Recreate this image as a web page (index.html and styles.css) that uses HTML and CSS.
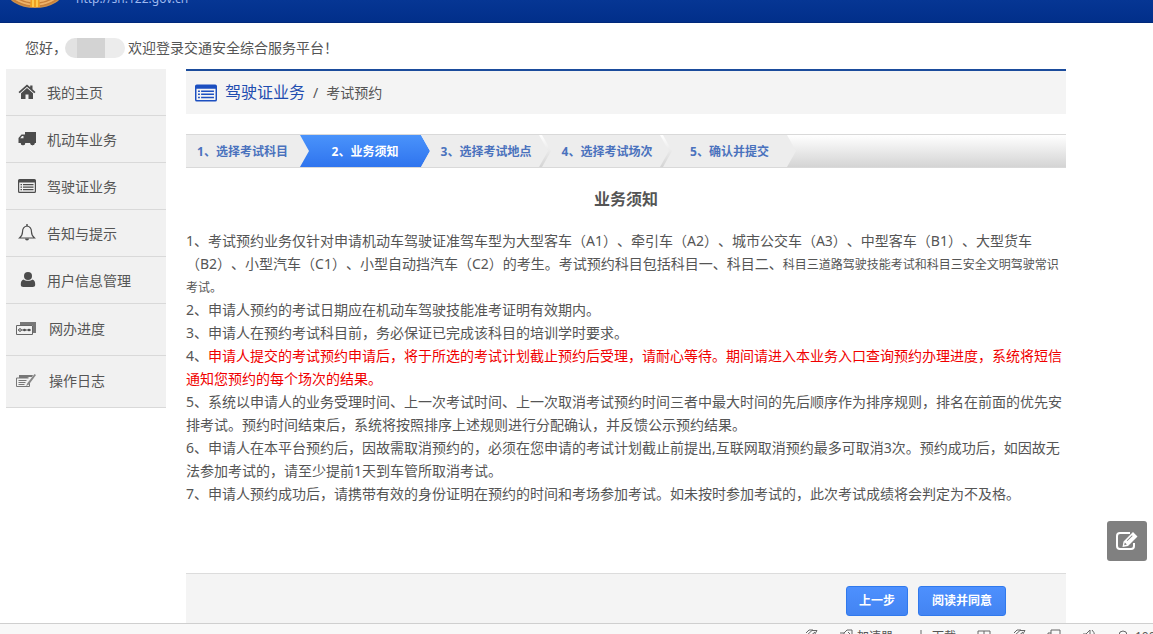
FILE: index.html
```html
<!DOCTYPE html>
<html lang="zh-CN">
<head>
<meta charset="utf-8">
<title>考试预约 - 交通安全综合服务平台</title>
<link rel="stylesheet" href="styles.css">
</head>
<body>
<header class="banner">
  <svg class="emblem" viewBox="0 0 60 30" aria-hidden="true">
    <ellipse cx="30" cy="12" rx="29" ry="18" fill="#c9904e"/>
    <ellipse cx="30" cy="11" rx="26" ry="17" fill="#eeb36a"/>
    <path d="M6 20q9 7 20 8M54 20q-9 7-20 8M12 20q6 4 14 5M48 20q-6 4-14 5" fill="none" stroke="#c9803a" stroke-width="1.500"/>
    <path d="M26 16h8l1 13H25z" fill="#f0a020"/>
    <path d="M28 16v13M32 16v13" stroke="#ffd75a" stroke-width="1.500"/>
  </svg>
  <a class="site" href="#">http://sh.122.gov.cn</a>
</header>

<div class="page">
  <p class="greeting">您好，<span class="redacted"></span>欢迎登录交通安全综合服务平台！</p>
  <div class="columns">
    <nav class="menu">
      <a href="#"><svg viewBox="0 0 18 18"><path d="M9 1.500.5 9l1.200 1.200L9 3.800l7.300 6.400L17.500 9 14.500 6.300V2.500h-2.300v1.800z"/><path d="M3 10.300 9 5l6 5.300V16h-4.500v-4.500h-3V16H3z"/></svg>我的主页</a>
      <a href="#"><svg viewBox="0 0 18 18"><path fill-rule="evenodd" d="M7 2h11v11h-1.200a2.300 2.300 0 0 1-4.600 0H7.300a2.300 2.300 0 0 1-4.600 0H.5V8l3-3.500H7zM2.200 8.200H5.500V6H4z"/><circle cx="5" cy="13.500" r="1.800"/><circle cx="14.500" cy="13.500" r="1.800"/></svg>机动车业务</a>
      <a href="#"><svg viewBox="0 0 18 18"><use href="#list"/></svg>驾驶证业务</a>
      <a href="#"><svg viewBox="0 0 18 18"><path d="M9 2C5.500 2.500 4.500 5 4.500 8c0 3-1.200 4.500-3 6h15c-1.800-1.500-3-3-3-6 0-3-1-5.500-4.500-6z" fill="none" stroke="currentColor" stroke-width="1.200"/><path d="M8.300 0h1.400v2H8.300zM7 14.500h4a2 2 0 0 1-4 0z"/></svg>告知与提示</a>
      <a href="#"><svg viewBox="0 0 18 18"><circle cx="10" cy="5" r="4"/><path d="M5.500 8.500C7 10.300 13 10.300 14.500 8.500 16.500 9 17.200 11 17.200 13.500c0 1.800-1 2.500-2.500 2.500H5.300c-1.500 0-2.500-.7-2.500-2.500C2.800 11 3.500 9 5.500 8.500z"/></svg>用户信息管理</a>
      <a class="tall" href="#"><svg viewBox="0 0 20 18"><path d="M4 2h16v11h-3V5H4z" fill="#777"/><path d="M.5 5.500h16v9H.5z" fill="#f1f1f1" stroke="#666"/><path d="M2 10h13" stroke="#555" stroke-width="1"/><circle cx="4" cy="10" r="1.300" fill="#f1f1f1" stroke="#555"/><circle cx="8.500" cy="10" r="1.300"/><circle cx="13" cy="10" r="1.300"/></svg>网办进度</a>
      <a class="tall" href="#"><svg viewBox="0 0 20 18"><path d="M3 6V3h14l-1 2h-3l-2 1z" fill="#777"/><path d="M.5 6h12M.5 6v8.500h13V10" fill="none" stroke="#777"/><path d="M2.500 8.500h8M2.500 10.500h7M2.500 12.500h6" stroke="#777"/><path d="m18.500 2-7 9-1.500 3 3-1.500L20 3z" fill="#888"/></svg>操作日志</a>
    </nav>

    <main class="content">
      <h1 class="crumbs">
        <svg viewBox="0 0 18 18" aria-hidden="true"><g id="list"><path fill-rule="evenodd" d="M1.500 2h15A1.500 1.500 0 0 1 18 3.500v11a1.500 1.500 0 0 1-1.500 1.500h-15A1.500 1.500 0 0 1 0 14.500v-11A1.500 1.500 0 0 1 1.500 2zM1.200 5.500v9l.3.300h15l.3-.3v-9z"/><path d="M2.500 7H4v1.200H2.500zM5 7h10.500v1.200H5zM2.500 9.500H4v1.200H2.500zM5 9.500h10.500v1.200H5zM2.500 12H4v1.200H2.500zM5 12h10.500v1.200H5z"/></g></svg>
        <a href="#">驾驶证业务</a><span>/</span><span>考试预约</span>
      </h1>

      <ol class="steps">
        <li class="first">1、选择考试科目</li>
        <li class="current" aria-current="step">2、业务须知</li>
        <li>3、选择考试地点</li>
        <li>4、选择考试场次</li>
        <li class="last">5、确认并提交</li>
      </ol>

      <h2 class="title">业务须知</h2>
      <div class="notice">
        <p>1、考试预约业务仅针对申请机动车驾驶证准驾车型为大型客车（A1）、牵引车（A2）、城市公交车（A3）、中型客车（B1）、大型货车（B2）、小型汽车（C1）、小型自动挡汽车（C2）的考生。考试预约科目包括科目一、科目二、<small>科目三道路驾驶技能考试和科目三安全文明驾驶常识考试。</small></p>
        <p>2、申请人预约的考试日期应在机动车驾驶技能准考证明有效期内。</p>
        <p>3、申请人在预约考试科目前，务必保证已完成该科目的培训学时要求。</p>
        <p>4、<em>申请人提交的考试预约申请后，将于所选的考试计划截止预约后受理，请耐心等待。期间请进入本业务入口查询预约办理进度，系统将短信通知您预约的每个场次的结果。</em></p>
        <p>5、系统以申请人的业务受理时间、上一次考试时间、上一次取消考试预约时间三者中最大时间的先后顺序作为排序规则，排名在前面的优先安排考试。预约时间结束后，系统将按照排序上述规则进行分配确认，并反馈公示预约结果。</p>
        <p>6、申请人在本平台预约后，因故需取消预约的，必须在您申请的考试计划截止前提出,互联网取消预约最多可取消3次。预约成功后，如因故无法参加考试的，请至少提前1天到车管所取消考试。</p>
        <p>7、申请人预约成功后，请携带有效的身份证明在预约的时间和考场参加考试。如未按时参加考试的，此次考试成绩将会判定为不及格。</p>
      </div>
      <div class="actions">
        <button type="button">上一步</button>
        <button class="agree" type="button">阅读并同意</button>
      </div>
    </main>
  </div>
</div>

<button class="feedback" type="button" aria-label="意见反馈">
  <svg viewBox="0 0 22 20"><path d="M14 2H4a3 3 0 0 0-3 3v10a3 3 0 0 0 3 3h11a3 3 0 0 0 3-3v-3" fill="none" stroke="#fff" stroke-width="2"/><path fill-rule="evenodd" d="m17 1 4.500 4.500L12 15l-5.500 1L7.500 10.500zM8.800 11.500l-.6 2.700 2.700-.6zM16 4.300 10.800 9.500l.6.600 5.200-5.200z" fill="#fff"/></svg>
</button>

<footer class="statusbar">
  <svg viewBox="0 0 14 14"><path d="M1 8 8 1.500h5L6 13M4 9l7-6M2 4l3-3h4"/></svg>
  <span class="tool"><svg viewBox="0 0 14 14"><path d="M1 4h4l3-3h5v6l-5 5M5 4v4h4M9 3l2 2"/></svg>加速器</span>
  <span class="tool"><svg viewBox="0 0 14 14"><path d="M7 1v10M3 7l4 4 4-4"/></svg>下载</span>
  <svg viewBox="0 0 14 14"><path d="M1 2h12v10H1zM7 2v10M1 6h12"/></svg>
  <svg viewBox="0 0 14 14"><path d="M1 8 8 1.500h5L6 13M4 9l7-6M2 4l3-3h4"/></svg>
  <svg viewBox="0 0 14 14"><path d="M4 1h9v9H4zM4 4H1v9h8v-3"/></svg>
  <svg viewBox="0 0 14 14"><path d="M1 5h3l4-4v12L4 9H1zM10 1q5 5 0 10"/></svg>
  <span class="tool zoom"><svg viewBox="0 0 14 14"><circle cx="6" cy="6" r="4"/><path d="m9 9 3 3"/></svg>100%</span>
</footer>
</body>
</html>
```
FILE: styles.css
```css
* { box-sizing: border-box; }
body {
  margin: 0;
  height: 100vh;
  display: flex;
  flex-direction: column;
  overflow: hidden;
  background: #fff;
  color: #555;
  font: 14px/23px "Noto Sans", "Noto Sans CJK SC", sans-serif;
  text-spacing-trim: space-all;
}
p, h1, h2, ol { margin: 0; padding: 0; }
a { color: inherit; text-decoration: none; }
svg { flex: none; fill: currentColor; }

.banner {
  flex: none;
  height: 23px;
  padding: 0 5px;
  display: flex;
  align-items: flex-end;
  gap: 11px;
  overflow: hidden;
  background: linear-gradient(#063694, #012f8a);
  border-bottom: 1px solid #00287a;
}
.emblem { width: 60px; height: 30px; margin-bottom: 14px; }
.site { margin-bottom: 12px; color: #9db8ee; font-size: 12px; }

.page {
  flex: 1;
  min-height: 0;
  display: flex;
  flex-direction: column;
}
.greeting {
  display: flex;
  align-items: center;
  height: 46px;
  padding: 3px 25px 0;
}
.redacted {
  width: 60px;
  height: 20px;
  margin: 0 3px 0 -2px;
  border-radius: 10px;
  background: linear-gradient(90deg, #e2e2e2 20%, #d3d3d3 20% 67%, #ececec 67%);
}
.columns {
  flex: 1;
  min-height: 0;
  display: flex;
  align-items: stretch;
  gap: 20px;
  padding: 0 87px 0 6px;
}

.menu { flex: none; width: 160px; }
.menu a {
  display: flex;
  align-items: center;
  gap: 11px;
  height: 47px;
  padding-left: 12px;
  background: #f1f1f1;
  border-bottom: 1px solid #d9d9d9;
}
.menu a.tall { height: 52px; padding: 0 0 2px 10px; gap: 13px; }
.menu svg { width: 18px; height: 18px; color: #4c4c4c; }
.menu .tall svg { width: 20px; }

.content {
  flex: 1;
  min-width: 0;
  display: flex;
  flex-direction: column;
}
.crumbs {
  flex: none;
  display: flex;
  align-items: center;
  gap: 8px;
  height: 45px;
  padding-left: 9px;
  border-top: 2px solid #1b4c9c;
  background: #f4f4f4;
  font-size: 14px;
  font-weight: 400;
}
.crumbs svg { width: 22px; height: 22px; color: #1c4fc0; }
.crumbs a { color: #1f4db0; font-size: 16px; }

.steps {
  flex: none;
  display: flex;
  height: 34px;
  margin-top: 20px;
  border: solid #d9d9d9;
  border-width: 1px 0;
  background: linear-gradient(#fff, #d4d4d4);
  list-style: none;
  color: #4a72bd;
  font-size: 12px;
  font-weight: 700;
  line-height: 34px;
  text-align: center;
}
.steps li {
  width: 130px;
  margin-right: -9px;
  background: #ededed;
  clip-path: polygon(0 0, 118px 0, 127px 50%, 118px 100%, 0 100%, 9px 50%);
}
.steps .first {
  width: 123px;
  padding-right: 10px;
  clip-path: polygon(0 0, 114px 0, 100% 50%, 114px 100%, 0 100%);
}
.steps .current {
  background: linear-gradient(#4a93fb, #2f74ee);
  color: #fff;
  clip-path: polygon(0 0, 121px 0, 100% 50%, 121px 100%, 0 100%, 9px 50%);
}
.steps .last {
  width: 133px;
  clip-path: polygon(0 0, 124px 0, 100% 50%, 124px 100%, 0 100%, 9px 50%);
}

.title {
  margin-top: 20px;
  font-size: 16px;
  line-height: 23px;
  text-align: center;
}
.notice { margin-top: 18px; }
.notice small { font-size: 12px; line-height: 16px; }
.notice em { color: #f00000; font-style: normal; }

.actions {
  flex: none;
  display: flex;
  justify-content: flex-end;
  gap: 10px;
  height: 50px;
  margin-top: auto;
  padding: 12px 60px 0;
  border-top: 1px solid #dcdcdc;
  background: #f4f4f4;
}
.actions button {
  height: 30px;
  padding: 0 12px;
  border: 1px solid #3079ed;
  border-radius: 3px;
  background: linear-gradient(#4d90fe, #4384f2);
  color: #fff;
  font: 700 12px/28px "Noto Sans", "Noto Sans CJK SC", sans-serif;
}
.actions .agree { min-width: 88px; }

.feedback {
  position: fixed;
  right: 6px;
  bottom: 73px;
  display: grid;
  place-items: center;
  width: 40px;
  height: 40px;
  padding: 0;
  border: 0;
  border-radius: 3px;
  background: #808080;
}
.feedback svg { width: 22px; height: 20px; }

.statusbar {
  flex: none;
  display: flex;
  align-items: flex-start;
  justify-content: flex-end;
  gap: 21px;
  height: 11px;
  padding-top: 5px;
  overflow: hidden;
  border-top: 1px solid #cfcfcf;
  background: #f8f8f8;
  font-size: 12px;
  line-height: 16px;
}
.statusbar svg { width: 14px; height: 14px; fill: none; stroke: #666; }
.tool { display: flex; gap: 4px; }
.zoom { width: 36px; }
```
